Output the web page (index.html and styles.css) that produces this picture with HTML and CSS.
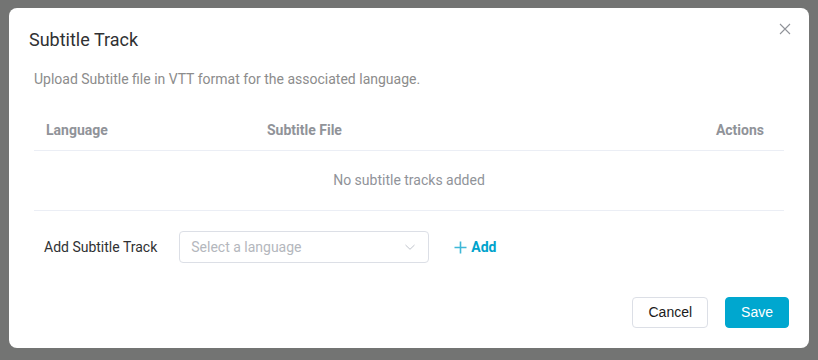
FILE: index.html
```html
<!doctype html>
<html lang="en">
<head>
    <meta charset="UTF-8">
    <title>Subtitle Track</title>
    <link rel="stylesheet" href="styles.css">
</head>
<body>

    <div class="overlay">
        <div class="dialog">

            <div class="dialog-header">
                <span class="dialog-title">Subtitle Track</span>
                <button class="dialog-close" aria-label="Close">
                    <svg width="12" height="12" viewBox="0 0 12 12">
                        <path d="M1 1 L11 11 M11 1 L1 11" stroke="#909399" stroke-width="1.1" fill="none"/>
                    </svg>
                </button>
            </div>

            <div class="dialog-body">
                <p class="hint">Upload Subtitle file in VTT format for the associated language.</p>

                <div class="tracks">
                    <div class="tracks-head">
                        <span class="col-lang">Language</span>
                        <span class="col-file">Subtitle File</span>
                        <span class="col-actions">Actions</span>
                    </div>
                    <div class="tracks-empty">No subtitle tracks added</div>
                </div>

                <div class="add-row">
                    <label class="add-label">Add Subtitle Track</label>
                    <div class="select">
                        <span class="placeholder">Select a language</span>
                        <svg class="chevron" width="12" height="12" viewBox="0 0 12 12">
                            <path d="M1.5 4 L6 8.3 L10.5 4" stroke="#c0c4cc" stroke-width="1" fill="none"/>
                        </svg>
                    </div>
                    <button class="add-btn">
                        <svg width="13" height="13" viewBox="0 0 13 13">
                            <path d="M6.5 0.5 V12.5 M0.5 6.5 H12.5" stroke="#3fb8d8" stroke-width="1.6" fill="none"/>
                        </svg>
                        <span>Add</span>
                    </button>
                </div>
            </div>

            <div class="dialog-footer">
                <button class="btn">Cancel</button>
                <button class="btn primary">Save</button>
            </div>

        </div>
    </div>

</body>
</html>
```

FILE: styles.css
```css
body{
    margin: 0;
    background-color: #737473;
    font-family: Roboto, "Liberation Sans", sans-serif;
    font-size: 14px;
    color: #303133;
}

.overlay{
    padding: 8px 9px;
    height: 344px;
}

.dialog{
    width: 800px;
    background-color: #fff;
    border-radius: 8px;
    position: relative;
}

.dialog-header{
    padding: 20px 20px 0;
}

.dialog-title{
    display: block;
    font-size: 18px;
    line-height: 24px;
    color: #303133;
}

.dialog-close{
    position: absolute;
    top: 14px;
    right: 17px;
    width: 14px;
    height: 14px;
    padding: 0;
    border: none;
    background: none;
    display: flex;
    align-items: center;
    justify-content: center;
}

.dialog-body{
    padding: 17px 25px 0;
}

.hint{
    margin: 0 0 21px;
    line-height: 20px;
    color: #8c8c8c;
}

.tracks-head{
    display: grid;
    grid-template-columns: 221px 1fr auto;
    border-bottom: 1px solid #ebeef5;
    font-weight: bold;
    color: #909399;
    line-height: 20px;
}

.tracks-head span{
    padding: 10px 12px;
}

.tracks-head .col-actions{
    padding-right: 20px;
}

.tracks-empty{
    border-bottom: 1px solid #ebeef5;
    text-align: center;
    line-height: 19px;
    padding: 20px 12px;
    color: #909399;
}

.add-row{
    display: flex;
    align-items: center;
    margin-top: 20px;
}

.add-label{
    margin: 0 22px 0 10px;
    color: #303133;
}

.select{
    width: 225px;
    height: 30px;
    border: 1px solid #dcdfe6;
    border-radius: 4px;
    padding: 0 12px 0 11px;
    display: flex;
    align-items: center;
    justify-content: space-between;
}

.placeholder{
    color: #b4b7bd;
}

.add-btn{
    margin-left: 25px;
    padding: 0;
    border: none;
    background: none;
    display: flex;
    align-items: center;
    gap: 4px;
    font-family: Roboto, sans-serif;
    font-size: 14px;
    font-weight: bold;
    color: #00a3cc;
}

.dialog-footer{
    padding: 34px 20px 20px;
    display: flex;
    justify-content: flex-end;
    gap: 17px;
}

.btn{
    font-family: "Liberation Sans", Arial, sans-serif;
    font-size: 14px;
    line-height: 29px;
    padding: 0 15px;
    border: 1px solid #dcdfe6;
    border-radius: 4px;
    background-color: #fff;
    color: #1a1a1a;
}

.btn.primary{
    background-color: #00a7cf;
    border-color: #00a7cf;
    color: #fff;
}
```
